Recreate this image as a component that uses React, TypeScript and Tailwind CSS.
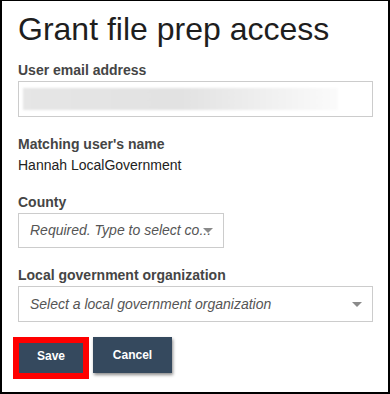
import React from "react";

function Caret() {
  return (
    <svg width="10" height="5" viewBox="0 0 10 5" className="shrink-0">
      <polygon points="0,0 10,0 5,5" fill="#8a8a8a" />
    </svg>
  );
}

export default function App() {
  return (
    <div
      className="w-[390px] h-[394px] bg-white border-black border-t border-x-2 border-b-2 pl-4 pr-[15px] pt-[10px] text-[#222]"
      style={{ fontFamily: '"Liberation Sans", Arial, sans-serif' }}
    >
      <h1 className="text-[32px] leading-[36px] font-normal text-[#1e1e1e]">Grant file prep access</h1>

      <div className="mt-[13px] text-[14px] leading-[20px] font-bold text-[#454545]">User email address</div>
      <div className="mt-[1px] h-[36px] border border-[#cccccc] pl-[4px] pt-[6px]">
        <div className="h-[22px] w-[315px] blur-[1px] bg-linear-to-r from-[#e6e6e6] via-[#e2e2e2] to-[#fbfbfb]" />
      </div>

      <div className="mt-[17px] text-[14px] leading-[20px] font-bold text-[#454545]">Matching user's name</div>
      <div className="text-[14px] leading-[20px] mt-[1px]">Hannah LocalGovernment</div>

      <div className="mt-[17px] text-[14px] leading-[20px] font-bold text-[#454545]">County</div>
      <div className="relative mt-[1px] h-[35px] w-[206px] border border-[#cccccc] flex items-center pl-[11px]">
        <span className="whitespace-nowrap italic text-[14px] text-[#555]">Required. Type to select co...</span>
        <span className="absolute right-[10px] top-[14px] flex"><Caret /></span>
      </div>

      <div className="mt-[17px] text-[14px] leading-[20px] font-bold text-[#454545]">Local government organization</div>
      <div className="mt-[1px] h-[36px] border border-[#cccccc] flex items-center pl-[11px] pr-[10px]">
        <span className="flex-1 min-w-0 whitespace-nowrap italic text-[14px] text-[#555]">Select a local government organization</span>
        <Caret />
      </div>

      <div className="mt-[15px] flex items-start -ml-[5px]">
        <div className="border-[6px] border-[#ff0000]">
          <button className="w-[64px] h-[30px] pb-[4px] bg-[#35495e] text-white text-[12px] font-bold flex items-center justify-center">
            Save
          </button>
        </div>
        <button className="ml-[4px] w-[79px] h-[36px] bg-[#35495e] text-white text-[12px] font-bold flex items-center justify-center shadow-[1px_2px_3px_rgba(0,0,0,0.45)]">
          Cancel
        </button>
      </div>
    </div>
  );
}
